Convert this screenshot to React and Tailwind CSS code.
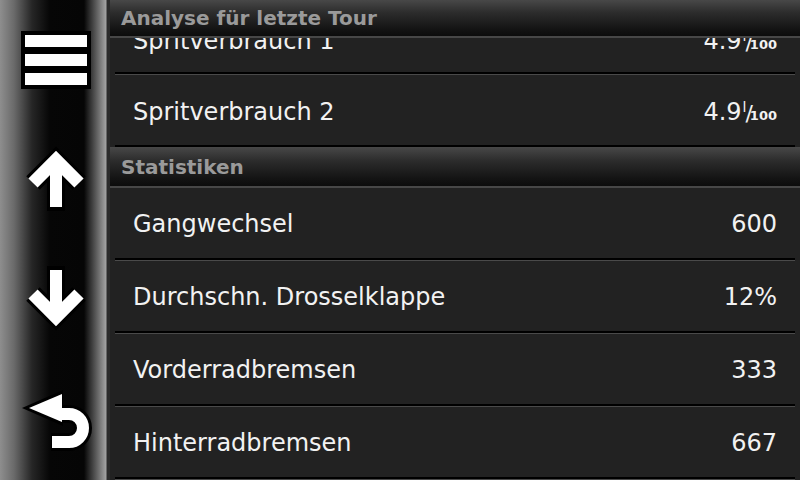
import React from "react";

const font = { fontFamily: '"DejaVu Sans", "Noto Sans", sans-serif' };

function Fuel() {
  return (
    <span className="flex items-baseline">
      <span>4.9</span>
      <span className="relative top-[-8px] text-[14px] ml-[1px]">l</span>
      <span className="ml-[-1px] text-[22px] relative top-[1px]">/</span>
      <span className="text-[13px] font-bold ml-[-3px]">100</span>
    </span>
  );
}

function Divider() {
  return (
    <>
      <div className="ml-[5px] mr-[5px] h-[2px] bg-black" />
      <div className="ml-[5px] mr-[5px] h-[1px] bg-[#4a4a4a]" />
    </>
  );
}

function Row({ label, value }) {
  return (
    <div className="flex flex-col">
      <div className="h-[70px] flex items-center justify-between pl-[23px] pr-[23px] pt-[2px] text-[24px] text-[#f2f2f2]">
        <span>{label}</span>
        <span>{value}</span>
      </div>
      <Divider />
    </div>
  );
}

function SectionHeader({ title, h }) {
  return (
    <div className="flex flex-col">
      <div
        className="flex items-center pl-[11px] text-[20px] font-bold text-[#9a9a9a] bg-[linear-gradient(to_bottom,#484848_0%,#2c2c2c_35%,#141414_80%,#0c0c0c_100%)]"
        style={{ height: h }}
      >
        {title}
      </div>
      <div className="h-[2px] bg-[#474747]" />
    </div>
  );
}

function Menu() {
  return (
    <svg width="80" height="80" viewBox="16 19 80 80">
      <rect x="21" y="30" width="70" height="58" fill="#000" />
      <rect x="25" y="34" width="62" height="12" fill="#fff" />
      <rect x="25" y="53" width="62" height="12" fill="#fff" />
      <rect x="25" y="72" width="62" height="12" fill="#fff" />
    </svg>
  );
}

function Arrow({ flip }) {
  return (
    <svg width="80" height="80" viewBox="16 140 80 80" style={flip ? { transform: "scaleY(-1)" } : undefined}>
      <g fill="none" strokeLinejoin="miter" strokeLinecap="butt">
        <polyline points="33,184 56,161 79,184" stroke="#000" strokeWidth="19" />
        <line x1="56" y1="165" x2="56" y2="212" stroke="#000" strokeWidth="18" />
        <polyline points="33,184 56,161 79,184" stroke="#fff" strokeWidth="13" />
        <line x1="56" y1="165" x2="56" y2="208" stroke="#fff" strokeWidth="12" />
      </g>
    </svg>
  );
}

function Back() {
  return (
    <svg width="80" height="80" viewBox="16 378 80 80">
      <g fill="none">
        <path d="M58 413 L69 413 A14 14 0 0 1 69 441 L51 441" stroke="#000" strokeWidth="18" />
        <polygon points="22,407 63,389 63,425" fill="#000" />
        <path d="M58 413 L69 413 A14 14 0 0 1 69 441 L52 441" stroke="#fff" strokeWidth="12" />
        <polygon points="29,407 62,393 62,421" fill="#fff" />
      </g>
    </svg>
  );
}

export default function App() {
  return (
    <div className="w-[800px] h-[480px] flex overflow-hidden bg-[#222222]" style={font}>
      <div className="w-[107px] shrink-0 flex flex-col bg-[linear-gradient(to_right,#8e8e8e_0px,#6a6a6a_14px,#262626_32px,#060606_50px,#050505_84px,#5a5a5a_96px,#a2a2a2_106px,#2a2a2a_107px)]">
        <div className="h-[119px] flex items-center justify-center pl-[4px]">
          <Menu />
        </div>
        <div className="h-[120px] flex items-center justify-center pl-[4px]">
          <Arrow />
        </div>
        <div className="h-[118px] flex items-center justify-center pl-[4px]">
          <Arrow flip />
        </div>
        <div className="h-[123px] flex items-center justify-center pl-[4px]">
          <Back />
        </div>
      </div>
      <div className="w-[3px] bg-[#2a2a2a]" />
      <div className="flex-1 flex flex-col overflow-hidden">
        <SectionHeader title="Analyse für letzte Tour" h={36} />
        <div className="h-[36px] overflow-hidden flex flex-col">
          <div className="mt-[-32px]">
            <div className="h-[70px] flex items-center justify-between pl-[23px] pr-[23px] text-[24px] text-[#f2f2f2]">
              <span>Spritverbrauch 1</span>
              <Fuel />
            </div>
          </div>
        </div>
        <Divider />
        <div className="flex flex-col">
          <div className="h-[70px] flex items-center justify-between pl-[23px] pr-[23px] pt-[3px] text-[24px] text-[#f2f2f2]">
            <span>Spritverbrauch 2</span>
            <Fuel />
          </div>
          <div className="ml-[5px] mr-[5px] h-[2px] bg-black" />
        </div>
        <SectionHeader title="Statistiken" h={39} />
        <Row label="Gangwechsel" value="600" />
        <Row label="Durchschn. Drosselklappe" value="12%" />
        <Row label="Vorderradbremsen" value="333" />
        <Row label="Hinterradbremsen" value="667" />
      </div>
    </div>
  );
}
